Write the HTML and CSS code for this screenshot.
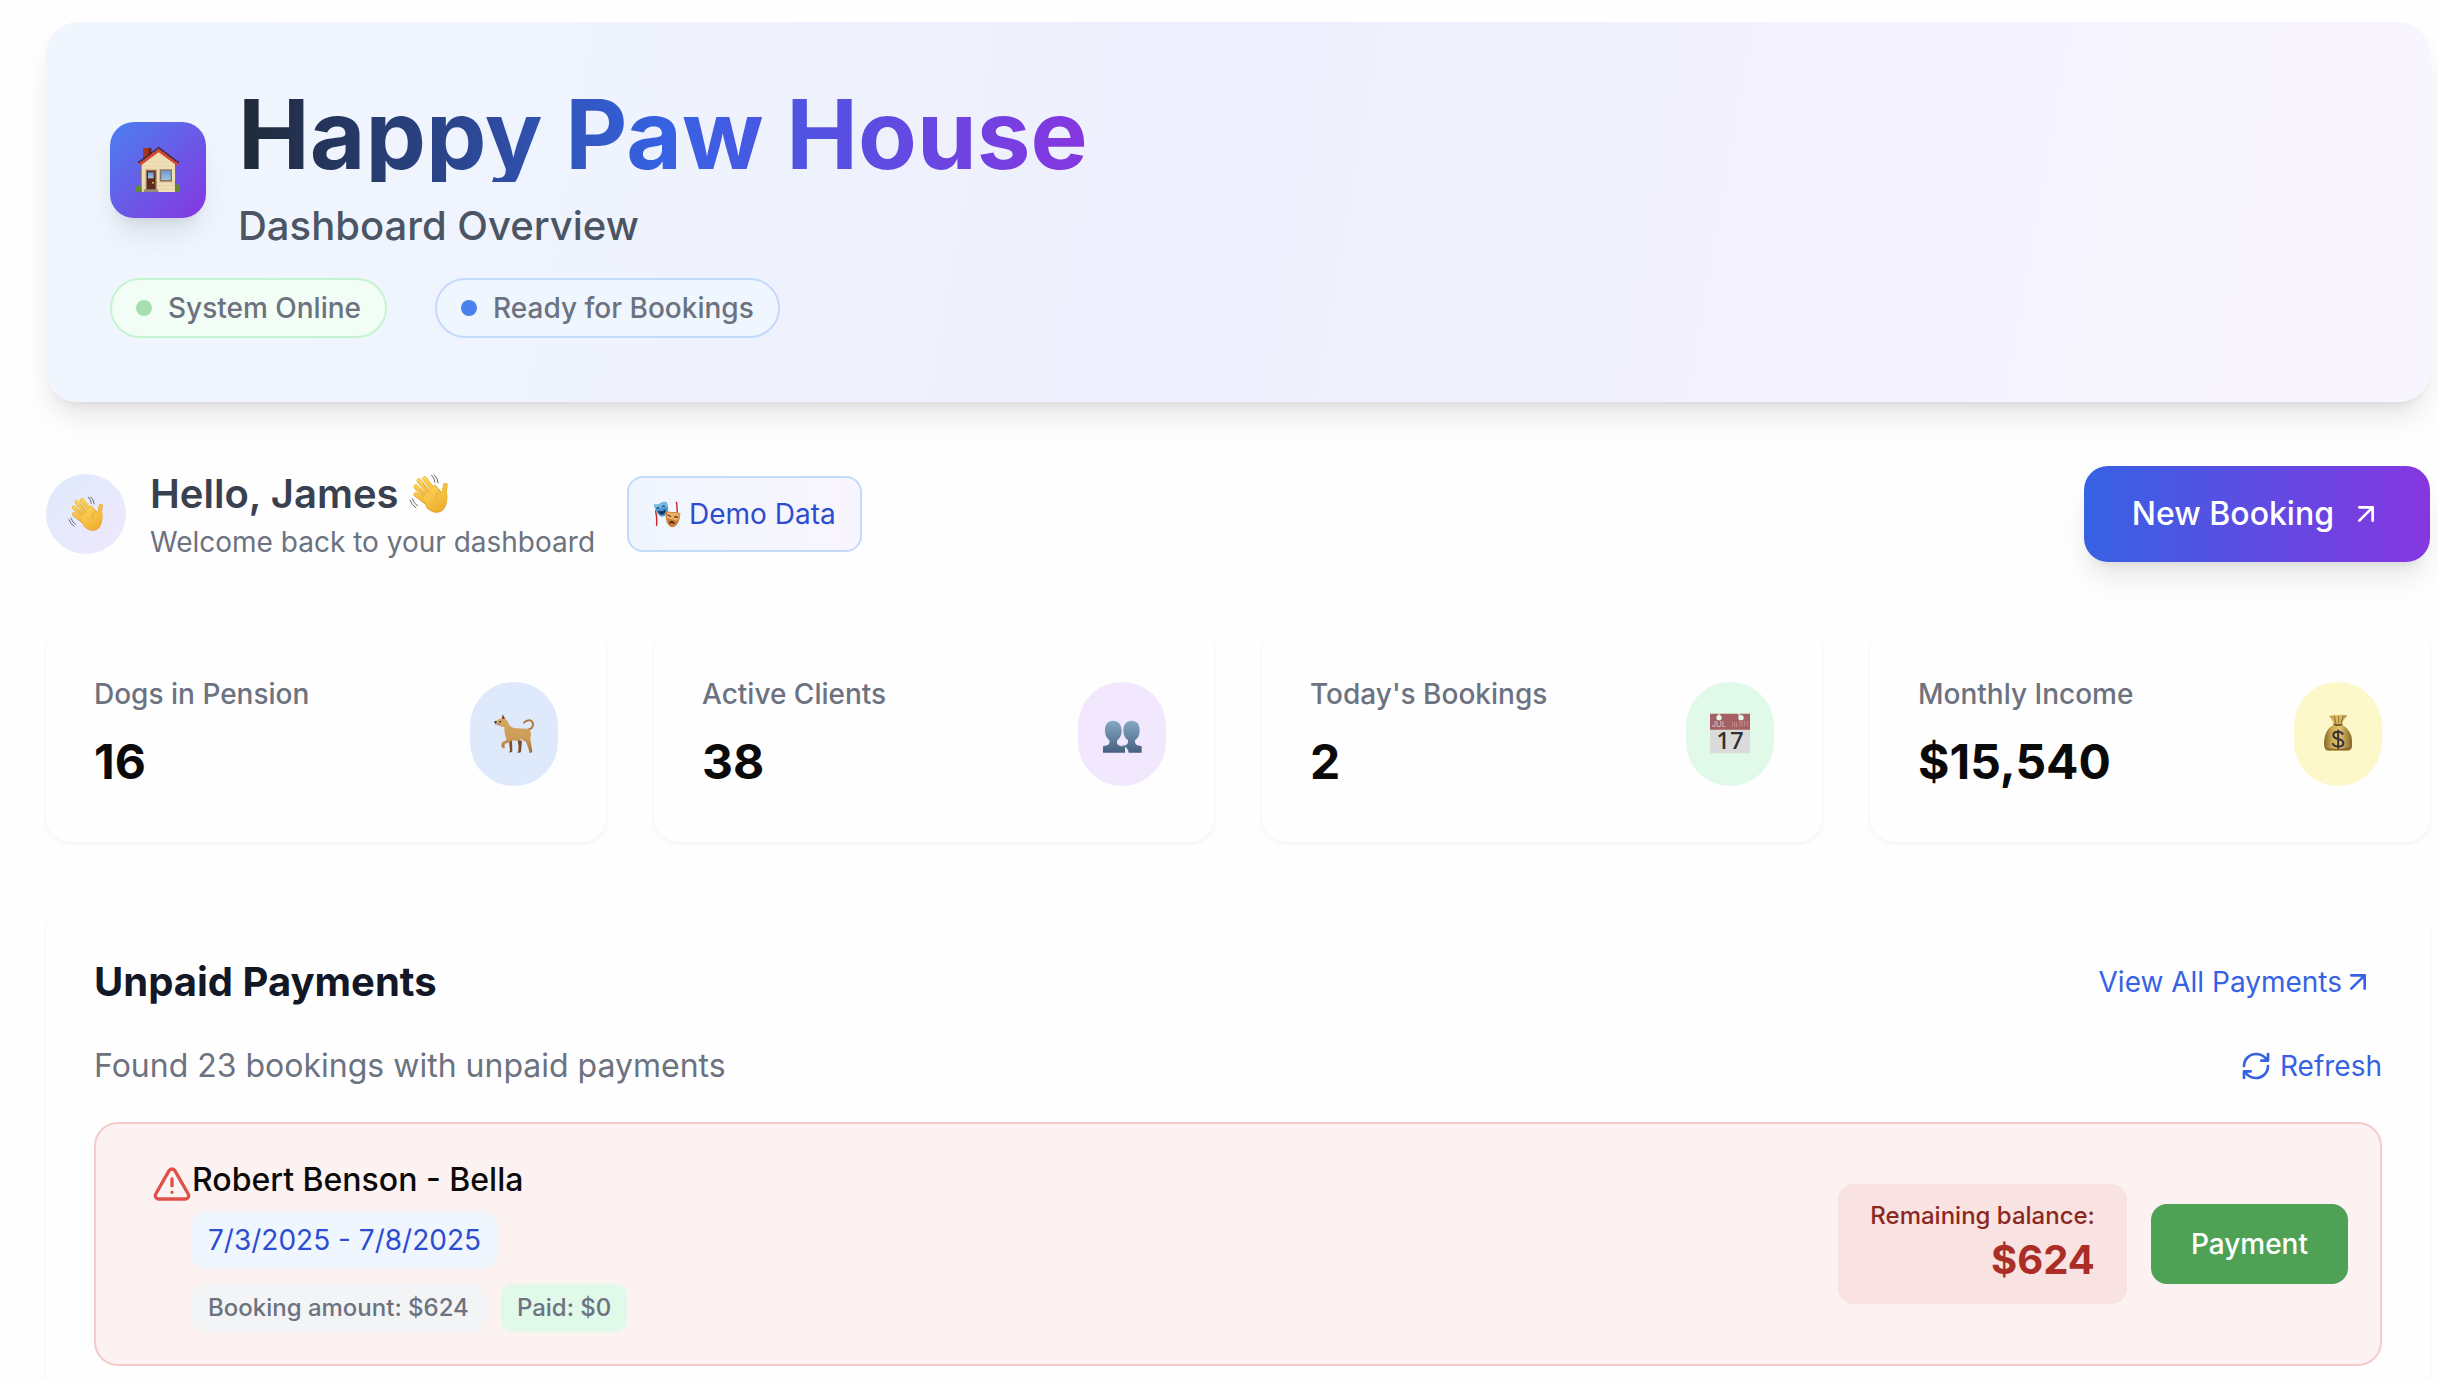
FILE: index.html
```html
<!DOCTYPE html>
<html lang="en">
<head>
<meta charset="utf-8">
<title>Happy Paw House</title>
<link rel="stylesheet" href="styles.css">
</head>
<body>
<svg class="sprite" aria-hidden="true">
  <defs>
    <linearGradient id="skin" x1="0" y1="0" x2="0.6" y2="1"><stop offset="0" stop-color="#ffd75e"/><stop offset="1" stop-color="#eeb02f"/></linearGradient>
    <linearGradient id="bust" x1="0" y1="0" x2="0" y2="1"><stop offset="0" stop-color="#86a9c4"/><stop offset="1" stop-color="#46607f"/></linearGradient>
    <linearGradient id="fur" x1="0" y1="0" x2="0" y2="1"><stop offset="0" stop-color="#d9ab64"/><stop offset="0.6" stop-color="#cd9c56"/><stop offset="1" stop-color="#a26e33"/></linearGradient>
    <linearGradient id="sack" x1="0" y1="0" x2="1" y2="0"><stop offset="0" stop-color="#83642b"/><stop offset="0.3" stop-color="#cfae52"/><stop offset="0.55" stop-color="#e2c66c"/><stop offset="1" stop-color="#86652b"/></linearGradient>
    <linearGradient id="glass" x1="0" y1="0" x2="0" y2="1"><stop offset="0" stop-color="#6a9bd0"/><stop offset="1" stop-color="#9cc3e6"/></linearGradient>
    <symbol id="wave" viewBox="27 24 122 122">
      <g stroke="#d99a26" stroke-width="14" stroke-linecap="round" fill="none">
        <path d="M75 38l32 42M57 44l38 46M48 63l40 38M48 86l36 28M138 58l-6 34"/>
      </g>
      <path d="M68 94l38-38 22 24 12-14q6 22 3 40-5 36-33 36-16 0-30-16z" fill="#dfa02c"/>
      <g stroke="url(#skin)" stroke-width="12" stroke-linecap="round" fill="none">
        <path d="M75 37l32 42M57 43l38 46M48 62l40 38M48 85l36 28M138 57l-7 33"/>
      </g>
      <path d="M70 94l36-36 18 22q4 4 8-4l8-8q5 22 2 38-5 32-32 33-15 0-29-15z" fill="url(#skin)"/>
      <path d="M70 55l20 26M60 72l20 20M118 78q-12 8-8 24" stroke="#d8992a" stroke-width="2" fill="none" stroke-linecap="round"/>
      <path d="M96 28q9 8 10 21M104 27q10 8 12 24M37 99q5 16 16 22M30 104q5 15 18 23" stroke="#4a4a4a" stroke-width="2.6" fill="none" stroke-linecap="round"/>
    </symbol>
  </defs>
</svg>

<main class="page">
  <header class="hero">
    <div class="brand">
      <div class="brand-icon">
        <svg class="emoji-lg" viewBox="132 136 144 144" role="img" aria-label="House">
          <path d="M159 142h25v40h-25z" fill="#a5361f"/><path d="M176 142h8v30h-8z" fill="#762214"/>
          <path d="M151 208h5v27h-5zM252 208h5v27h-5z" fill="#84725d"/>
          <path d="M155 186l51-38 49 38v88H155z" fill="#f0dfb6"/>
          <path d="M155 196h100M155 206h100M155 245h100M155 255h100M155 265h100M172 184h66" stroke="#dcc797" stroke-width="1.5"/>
          <path d="M144 187l62-45 61 45-6 8-55-40-55 40z" fill="#d5472f"/>
          <path d="M145 186l61-45 60 45" fill="none" stroke="#2b2631" stroke-width="5" stroke-dasharray="7 2"/>
          <path d="M167 207h33v62h-33z" fill="#9b7558"/><path d="M171 211h25v58h-25z" fill="#5d2b1c"/>
          <path d="M174 215h17v18h-17z" fill="url(#glass)"/><circle cx="189" cy="246" r="3" fill="#f0bd4c"/>
          <path d="M209 206h37v37h-37z" fill="#8c755d"/><path d="M214 210h28v28h-28z" fill="url(#glass)"/>
          <path d="M163 266h40l3 8h-46z" fill="#988a79"/>
          <path d="M137 273q-1-18 9-21 10 3 9 21zM255 273q-1-22 7-23 9 4 8 23z" fill="#628b2d"/>
        </svg>
      </div>
      <div class="brand-text">
        <h1 class="title">Happy Paw House</h1>
        <p class="subtitle">Dashboard Overview</p>
      </div>
    </div>
    <div class="statuses">
      <span class="status status-online"><i class="dot"></i>System Online</span>
      <span class="status status-ready"><i class="dot"></i>Ready for Bookings</span>
    </div>
  </header>

  <section class="greeting">
    <div class="avatar"><svg class="emoji-sm" role="img" aria-label="Waving hand"><use href="#wave"/></svg></div>
    <div>
      <h2 class="hello">Hello, James <svg class="emoji" role="img" aria-label="Waving hand"><use href="#wave"/></svg></h2>
      <p class="welcome">Welcome back to your dashboard</p>
    </div>
    <span class="demo">
      <svg class="emoji-xs" viewBox="758 102 86 84" role="img" aria-label="Masks">
        <path d="M766 135q5 20 3 44M830 108q4 20 1 44" stroke="#c02f35" stroke-width="4.5" fill="none" stroke-linecap="round"/>
        <path d="M761 114q10 4 20-3 11-7 19-3 8 18 1 35-7 10-18 9-15-6-22-38z" fill="#4d98d2"/>
        <path d="M761 114q10 4 20-3 11-7 19-3 3 7 3 14-18 4-39 4z" fill="#79b9e5"/>
        <path d="M768 127q5-5 9-2M785 122q5-6 10-2M774 136q14 4 22-5-1 14-11 14-7-1-11-9z" stroke="#153653" stroke-width="2.6" fill="#153653"/>
        <path d="M802 135q8 4 18 3 11-1 22 4-1 26-13 37-9 8-18 4-15-11-14-39 1-8 5-9z" fill="#ca7e3a"/>
        <path d="M802 137q8 4 18 3 11-1 20 4-2 14-8 21-17-6-32-8z" fill="#e8ad66"/>
        <path d="M803 148q6-2 10 5M823 154q6-5 12 1M808 172q8-12 16 1-8-5-16-1z" stroke="#4e2914" stroke-width="3" fill="#4e2914"/>
      </svg>
      Demo Data
    </span>
    <button class="new-booking" type="button">New Booking
      <svg class="icon" viewBox="0 0 24 24"><path d="M7 7h10v10M7 17 17 7"/></svg>
    </button>
  </section>

  <section class="stats">
    <article class="stat">
      <div><p class="stat-label">Dogs in Pension</p><p class="stat-value">16</p></div>
      <div class="stat-icon blue">
        <svg class="emoji" viewBox="102 100 120 120" role="img" aria-label="Dog">
          <path d="M203 147q11-1 15-10 4-13-7-18-12-1-19 7" fill="none" stroke="#b07c3e" stroke-width="6" stroke-linecap="round"/>
          <path d="M147 180l9-2 1 34q0 4-10 3l3-5zM173 178l13 2-3 33q-1 4-11 3l3-5q2-16-2-33z" fill="#7d4e26"/>
          <path d="M103 124l14-9 8-2 5-9 6 11q8 5 12 17 6 9 20 11l33 1q12 3 12 17l-2 13 6 39q0 4-10 3l1-4-10-29q-9-2-13-8-12 7-29 4-8 9-21 10l-2 9q5 5-1 5-8-1-8-8l2-10q9-4 14-8-7-14-7-38-8 0-15-3-4-3-7-9z" fill="url(#fur)"/>
          <path d="M128 101l7 13-9 1z" fill="#78372e"/><circle cx="121" cy="123" r="2.5" fill="#332015"/><path d="M102 123l6-2 3 4-5 4z" fill="#36251d"/><path d="M106 131l12-1" stroke="#644123" stroke-width="2"/>
        </svg>
      </div>
    </article>
    <article class="stat">
      <div><p class="stat-label">Active Clients</p><p class="stat-value">38</p></div>
      <div class="stat-icon purple">
        <svg class="emoji" viewBox="156 162 120 120" role="img" aria-label="People">
          <path d="M189 182c-15 0-25 11-24 32 0 13 7 22 13 27 2 12-2 15-19 18v19h66v-18c-20-3-25-5-24-18 6-5 14-14 14-28 0-22-11-32-26-32z" fill="url(#bust)"/>
          <path d="M245 182c-15 0-26 11-25 32 0 13 7 22 14 27 1 12-3 15-20 17q20 2 22 20h39v-19c-17-3-21-7-20-18 7-5 14-14 14-27 1-22-9-32-24-32z" fill="url(#bust)"/>
          <path d="M216 257q17 1 19 14" stroke="#7799b5" stroke-width="2" fill="none"/>
        </svg>
      </div>
    </article>
    <article class="stat">
      <div><p class="stat-label">Today's Bookings</p><p class="stat-value">2</p></div>
      <div class="stat-icon green">
        <svg class="emoji" viewBox="150 160 120 120" role="img" aria-label="Calendar">
          <path d="M150 206h120v72H150z" fill="#dadada"/><path d="M150 159h120v48H150z" fill="#a46062"/>
          <path d="M175 159h4v8h-4zM233 159h5l4 8h-4z" fill="#e1f9e8"/><circle cx="177" cy="171" r="8" fill="#e1f9e8"/><circle cx="243" cy="171" r="8" fill="#e1f9e8"/>
          <path d="M218 185v14M224 183v16M230 184v16M240 181v18M246 181v17M254 180v18M262 180v16" stroke="#bd898a" stroke-width="3"/>
          <text class="cal-month" x="155" y="199">JUL</text><text class="cal-day" x="210" y="266">17</text>
        </svg>
      </div>
    </article>
    <article class="stat">
      <div><p class="stat-label">Monthly Income</p><p class="stat-value">$15,540</p></div>
      <div class="stat-icon yellow">
        <svg class="emoji" viewBox="144 162 120 120" role="img" aria-label="Money bag">
          <path d="M175 166q6 4 13 0 8-3 13 0 8-5 12-1 7-2 19 2-14 12-16 27 20 11 28 33 4 24 1 37-3 9-17 9h-48q-14 0-16-9-4-14 1-37 6-22 26-33-3-16-16-28z" fill="url(#sack)"/>
          <path d="M191 193q14 5 26 0" stroke="#72502a" stroke-width="5" fill="none"/>
          <path d="M193 169l5 22M206 168v22M219 168l-6 22" stroke="#8b6a31" stroke-width="3"/>
          <path d="M170 265q35 8 70-1" stroke="#80602a" stroke-width="4" fill="none"/>
          <path d="M219 224q-3-9-15-9-14 0-14 10 0 9 15 12 15 3 15 13 0 10-15 10-14 0-17-10M204.500 209v57" stroke="#352f3b" stroke-width="6" fill="none"/>
        </svg>
      </div>
    </article>
  </section>

  <section class="payments">
    <div class="row">
      <h2 class="heading">Unpaid Payments</h2>
      <a class="link view-all" href="#">View All Payments<svg class="icon" viewBox="0 0 24 24"><path d="M7 7h10v10M7 17 17 7"/></svg></a>
    </div>
    <div class="row">
      <p class="found">Found 23 bookings with unpaid payments</p>
      <button class="link refresh" type="button"><svg class="icon" viewBox="0 0 24 24"><path d="M3 12a9 9 0 0 1 9-9 9.750 9.750 0 0 1 6.740 2.740L21 8M21 3v5h-5M21 12a9 9 0 0 1-9 9 9.750 9.750 0 0 1-6.740-2.740L3 16M8 16H3v5"/></svg>Refresh</button>
    </div>
    <article class="booking">
      <svg class="icon alert" viewBox="0 0 24 24"><path d="m21.730 18-8-14a2 2 0 0 0-3.480 0l-8 14A2 2 0 0 0 4 21h16a2 2 0 0 0 1.730-3M12 9v4M12 17h.01"/></svg>
      <div class="details">
        <h3 class="client">Robert Benson - Bella</h3>
        <p class="dates">7/3/2025 - 7/8/2025</p>
        <div class="chips"><span class="chip">Booking amount: $624</span><span class="chip paid">Paid: $0</span></div>
      </div>
      <div class="balance">
        <p class="balance-label">Remaining balance:</p>
        <p class="balance-value">$624</p>
      </div>
      <button class="pay" type="button">Payment</button>
    </article>
  </section>
</main>
</body>
</html>
```
FILE: styles.css
```css
* { box-sizing: border-box; margin: 0; }
html { scrollbar-width: none; }
body { background: #fefefe; color: #0a0a0a; font: 28px/40px Inter, "Liberation Sans", sans-serif; }
button { border: 0; background: none; font: inherit; cursor: pointer; }
a { text-decoration: none; }
svg { flex-shrink: 0; }

.sprite { position: absolute; width: 0; height: 0; }
.page { display: flex; flex-direction: column; gap: 64px; padding: 22px 8px 48px 46px; }
.icon { width: 32px; height: 32px; fill: none; stroke: currentColor; stroke-width: 2; stroke-linecap: round; stroke-linejoin: round; }
.emoji-lg { width: 48px; height: 48px; }
.emoji { width: 40px; height: 40px; overflow: visible; }
.emoji-sm { width: 36px; height: 36px; }
.emoji-xs { width: 28px; height: 28px; }

.hero { padding: 64px; border-radius: 32px; background: linear-gradient(100deg, #f0f6fe, #eef0fd 50%, #f9f5fe); box-shadow: 0 20px 30px -6px rgb(0 0 0 / 10%), 0 8px 12px -8px rgb(0 0 0 / 10%); }
.brand { display: flex; align-items: center; gap: 32px; }
.brand-icon { display: grid; place-items: center; width: 96px; height: 96px; border-radius: 24px; background: linear-gradient(135deg, #4b80ef, #8636e0); box-shadow: 0 20px 30px -6px rgb(0 0 0 / 10%), 0 8px 12px -8px rgb(0 0 0 / 10%); }
.title { font-size: 96px; line-height: 96px; font-weight: 700; color: transparent; background: linear-gradient(90deg, #202937, #3662e3, #8636e0); background-clip: text; -webkit-background-clip: text; }
.subtitle { margin-top: 16px; font-size: 40px; line-height: 56px; font-weight: 500; color: #4c5563; }
.statuses { display: flex; gap: 48px; margin-top: 24px; }
.status { display: flex; align-items: center; gap: 16px; padding: 8px 24px; border: 2px solid; border-radius: 30px; font-weight: 500; color: #6c7280; }
.status-online { background: #f2fdf5; border-color: #c4f3d0; }
.status-ready { background: #f0f6fe; border-color: #c4dafb; }
.dot { width: 16px; height: 16px; border-radius: 50%; background: #4b80ef; }
.status-online .dot { background: #a5dfb0; }

.greeting { display: flex; align-items: center; }
.avatar { display: grid; place-items: center; width: 80px; height: 80px; margin-right: 24px; border-radius: 50%; background: linear-gradient(135deg, #deeafc, #f0e8fd); }
.hello { display: flex; align-items: center; gap: 10px; font-size: 40px; line-height: 56px; font-weight: 600; color: #394150; }
.welcome { color: #6c7280; }
.demo { display: flex; align-items: center; gap: 8px; margin-left: 32px; padding: 16px 24px; border: 2px solid #c4dafb; border-radius: 16px; background: linear-gradient(90deg, #f0f6fe, #f9f5fe); color: #2c4dd0; }
.new-booking { display: flex; align-items: center; gap: 16px; margin-left: auto; padding: 24px 48px; border-radius: 24px; font-size: 32px; line-height: 48px; font-weight: 500; color: #fff; background: linear-gradient(90deg, #3662e3, #8636e0); box-shadow: 0 20px 30px -6px rgb(0 0 0 / 10%), 0 8px 12px -8px rgb(0 0 0 / 10%); }

.stats { display: grid; grid-template-columns: repeat(4, 1fr); gap: 48px; }
.stat { display: flex; align-items: center; justify-content: space-between; padding: 48px; border-radius: 24px; background: #fefefe; box-shadow: 0 2px 4px rgb(0 0 0 / 5%); }
.stat-label { font-weight: 500; color: #6c7280; }
.stat-value { margin-top: 16px; font-size: 48px; line-height: 64px; font-weight: 700; }
.stat-icon { display: grid; place-items: center; padding: 32px 24px; border-radius: 44px; }
.blue { background: #deeafc; }
.purple { background: #f1e8fd; }
.green { background: #e1f9e8; }
.yellow { background: #fdf8c9; }
.cal-month { font-size: 23px; fill: #e2caca; }
.cal-day { font-family: "Noto Sans", sans-serif; font-size: 72px; font-weight: 500; text-anchor: middle; fill: #2e2e2e; }

.payments { display: flex; flex-direction: column; gap: 32px; padding: 48px; border-radius: 24px; box-shadow: 0 2px 4px rgb(0 0 0 / 5%); }
.row { display: flex; align-items: center; justify-content: space-between; }
.heading { font-size: 40px; line-height: 56px; font-weight: 700; color: #121826; }
.found { font-size: 32px; line-height: 48px; color: #6c7280; }
.link { display: flex; align-items: center; padding: 0; color: #3662e3; }
.view-all { padding-right: 8px; }
.refresh { gap: 8px; }

.booking { display: flex; align-items: center; padding: 32px 32px 32px 56px; border: 2px solid #f5caca; border-radius: 24px; background: #fcf2f1; }
.alert { width: 40px; height: 40px; margin-top: 8px; align-self: flex-start; color: #df5049; }
.details { display: flex; flex-direction: column; align-items: flex-start; }
.client { font-size: 32px; line-height: 48px; font-weight: 500; }
.dates { margin-top: 8px; padding: 8px 16px; border-radius: 12px; background: #f0f6fe; color: #2c4dd0; }
.chips { display: flex; gap: 16px; margin-top: 16px; }
.chip { padding: 8px 16px; border-radius: 12px; background: #f3f4f6; font-size: 24px; line-height: 32px; font-weight: 500; color: #6c7280; }
.paid { background: #e1f9e8; }
.balance { margin-left: auto; padding: 16px 32px; border-radius: 16px; background: #f8e3e2; text-align: right; }
.balance-label { font-size: 24px; line-height: 32px; font-weight: 500; color: #8b2822; }
.balance-value { font-size: 40px; line-height: 56px; font-weight: 700; color: #aa2d26; }
.pay { margin-left: 24px; padding: 20px 40px; border-radius: 16px; background: #4fa255; font-weight: 500; color: #fff; }
```
